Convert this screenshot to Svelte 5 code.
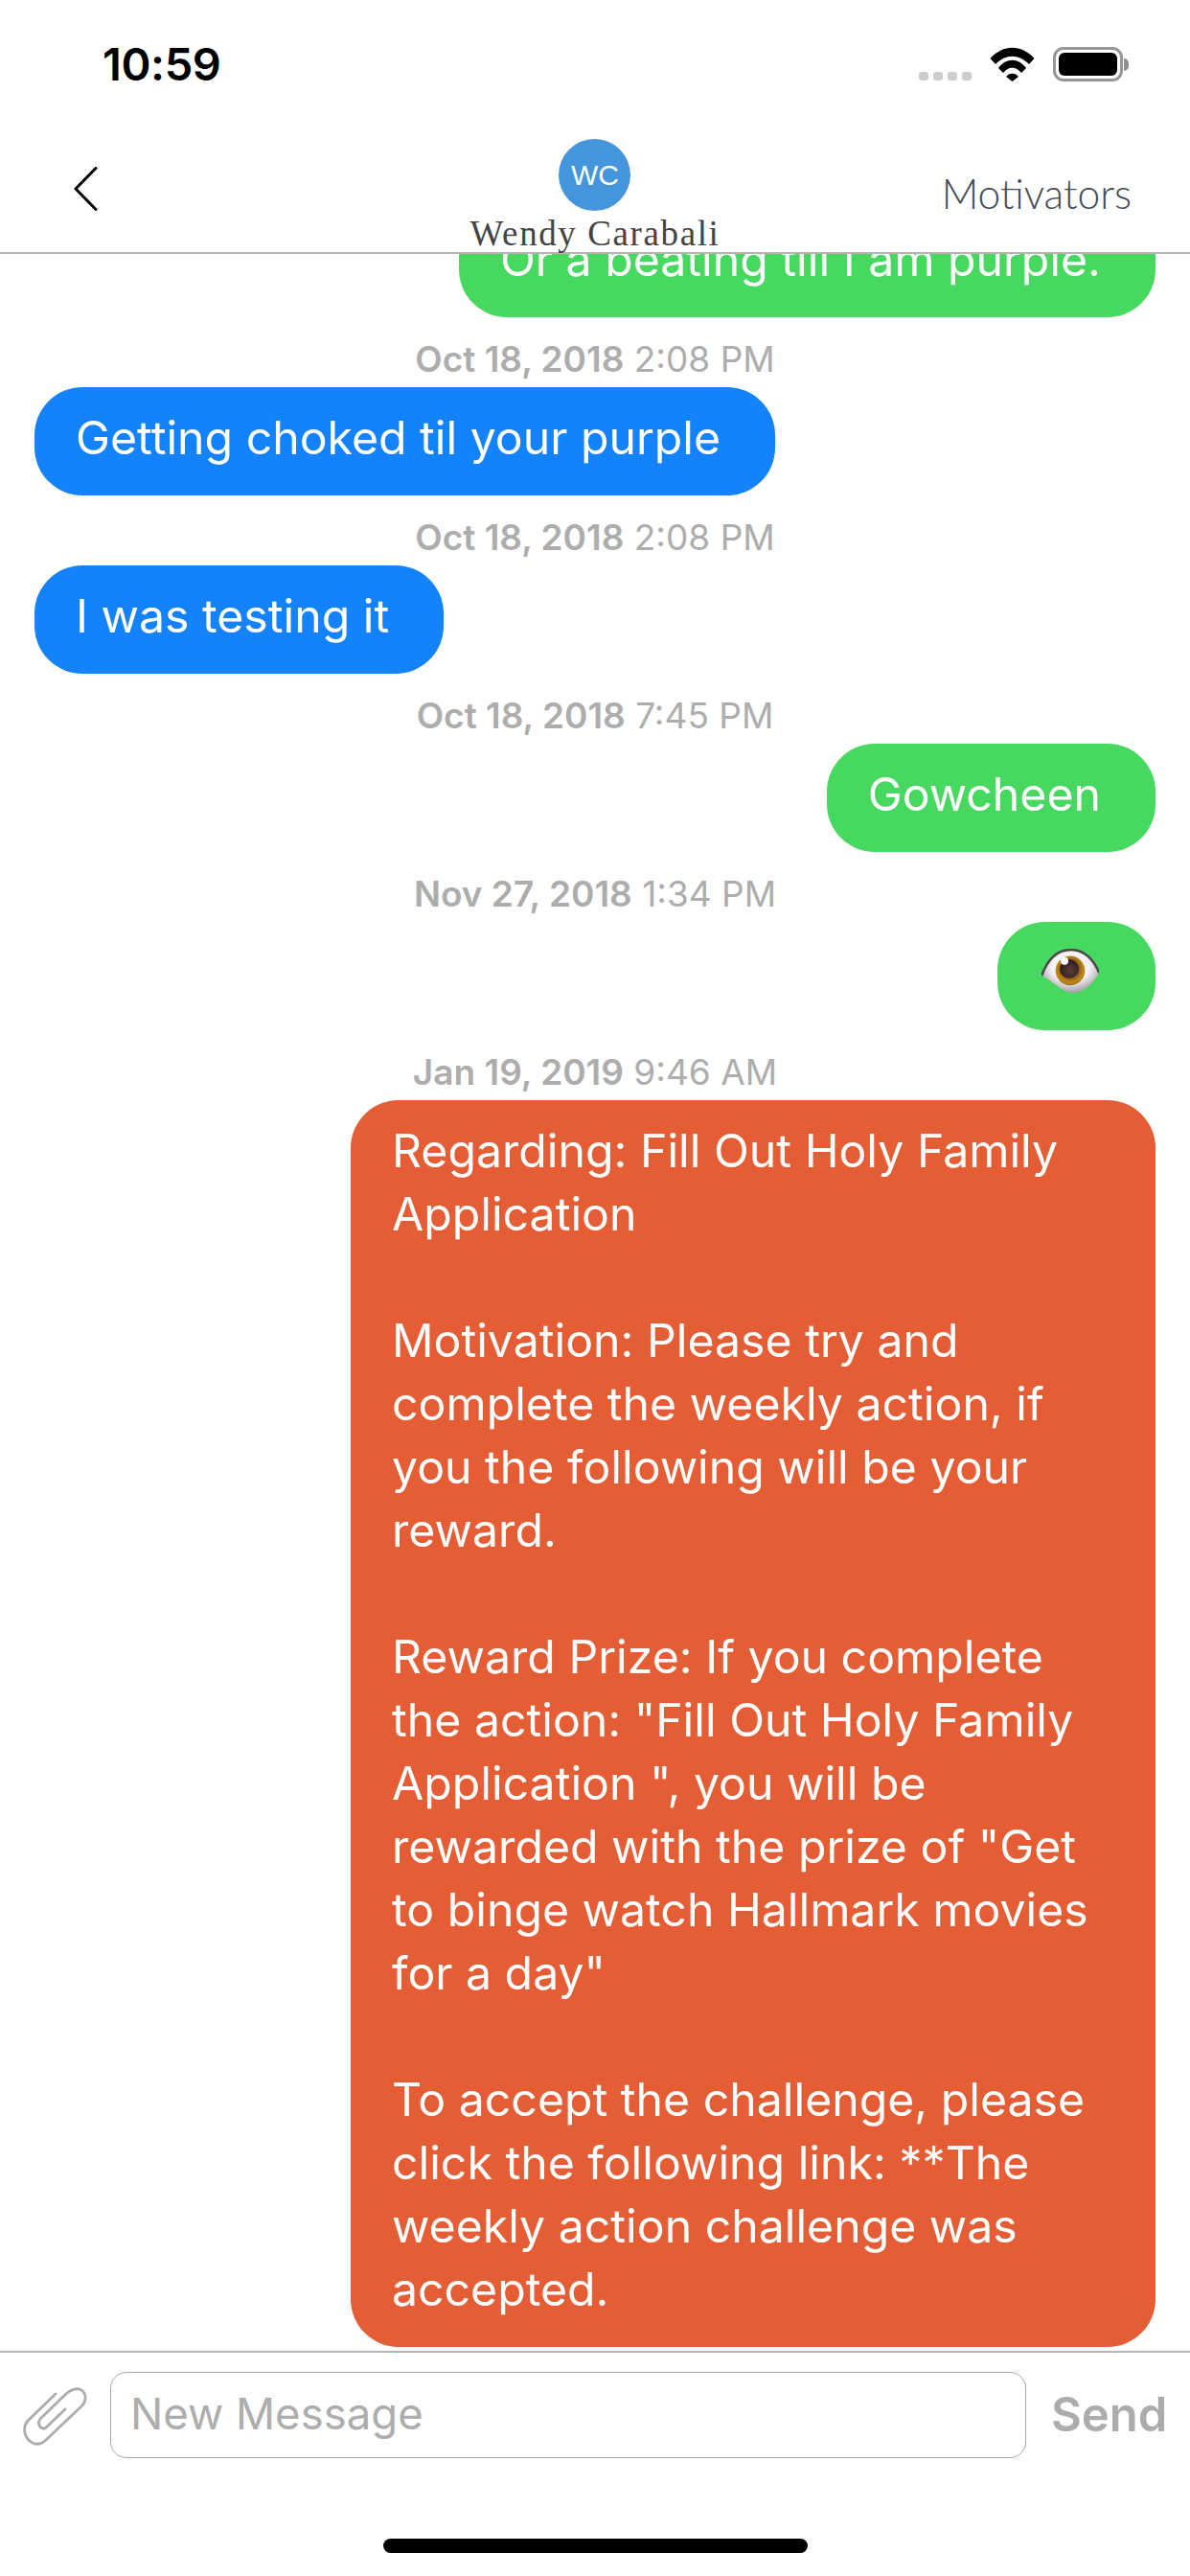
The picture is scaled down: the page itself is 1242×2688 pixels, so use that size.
<script>
  const messages = [
    { kind: 'sent', text: 'Or a beating till I am purple.' },
    { date: 'Oct 18, 2018', time: '2:08 PM', kind: 'received', text: 'Getting choked til your purple' },
    { date: 'Oct 18, 2018', time: '2:08 PM', kind: 'received', text: 'I was testing it' },
    { date: 'Oct 18, 2018', time: '7:45 PM', kind: 'sent', text: 'Gowcheen' },
    { date: 'Nov 27, 2018', time: '1:34 PM', kind: 'sent', eye: true },
    {
      date: 'Jan 19, 2019', time: '9:46 AM', kind: 'motivator',
      text: `Regarding: Fill Out Holy Family
Application

Motivation: Please try and
complete the weekly action, if
you the following will be your
reward.

Reward Prize: If you complete
the action: "Fill Out Holy Family
Application ", you will be
rewarded with the prize of "Get
to binge watch Hallmark movies
for a day"

To accept the challenge, please
click the following link: **The
weekly action challenge was
accepted.`
    }
  ];
</script>

<div class="screen">
  <div class="status">
    <span class="clock">10:59</span>
    <div class="indicators">
      <div class="signal"><i></i><i></i><i></i><i></i></div>
      <svg class="wifi" width="47" height="36" viewBox="0 0 47 36">
        <path d="M0.5 12C14-3 33-3 46.5 12L41 18C30 7 17 7 6 18Z" />
        <path d="M9 22C17 11 30 11 38 22L33 27C27 20 20 20 14 27Z" />
        <path d="M17 31C20 26.5 27 26.5 30 31L23.5 36Z" />
      </svg>
      <div class="battery"><div class="charge"></div></div>
      <div class="nub"></div>
    </div>
  </div>

  <header class="nav">
    <svg class="back" width="25" height="46" viewBox="0 0 25 46">
      <path d="M23 1.5L2 23L23 44.5" fill="none" stroke="#000" stroke-width="3" stroke-linecap="round" stroke-linejoin="round" />
    </svg>
    <div class="contact">
      <div class="avatar">WC</div>
      <div class="name">Wendy Carabali</div>
    </div>
    <div class="right">Motivators</div>
  </header>

  <main class="thread">
    {#each messages as m}
      {#if m.date}
        <div class="stamp"><b>{m.date}</b> {m.time}</div>
      {/if}
      <div class="bubble {m.kind}">
        {#if m.eye}
          <svg class="eye" width="60" height="46" viewBox="0 0 60 46">
            <defs>
              <radialGradient id="white" cx="50%" cy="40%" r="60%">
                <stop offset="0.55" stop-color="#f4f2f4" />
                <stop offset="1" stop-color="#a59ca6" />
              </radialGradient>
              <radialGradient id="iris" cx="50%" cy="45%" r="55%">
                <stop offset="0.55" stop-color="#8a5a20" />
                <stop offset="0.85" stop-color="#c58d12" />
                <stop offset="1" stop-color="#8a6012" />
              </radialGradient>
              <radialGradient id="pupil" cx="55%" cy="60%" r="60%">
                <stop offset="0" stop-color="#5c3f3c" />
                <stop offset="1" stop-color="#2c1c1e" />
              </radialGradient>
            </defs>
            <path d="M0.3 28C6 12 16 1 31 1C45 1 55 12 60 25C54 36 44 46 33 46C22 46 12 34 0.3 28Z" fill="url(#white)" />
            <path d="M0.3 28C6 12 16 1 31 1C45 1 55 12 60 25" fill="none" stroke="#47464a" stroke-width="2.4" />
            <circle cx="30" cy="22.7" r="15.3" fill="url(#iris)" />
            <circle cx="29" cy="21" r="10" fill="url(#pupil)" />
            <circle cx="24" cy="12.7" r="4" fill="#fff" />
          </svg>
        {:else}
          {m.text}
        {/if}
      </div>
    {/each}
  </main>

  <footer class="composer">
    <div class="bar">
      <svg class="clip" width="70" height="64" viewBox="22 28 70 64">
        <path d="M58 36L29 64C23 71 25 84 36 88C41 89 45 87 48 84L86 48C91 42 90 34 83 31C78 30 74 32 70 35L42 62C39 66 41 73 47 72L68 52" fill="none" stroke="#acacac" stroke-width="2.8" stroke-linecap="round" stroke-linejoin="round" />
      </svg>
      <div class="field">New Message</div>
      <span class="send">Send</span>
    </div>
    <div class="home"></div>
  </footer>
</div>

<style>
  :global(body) {
    margin: 0;
    background: #fff;
  }

  .screen {
    width: 1242px;
    height: 2688px;
    display: flex;
    flex-direction: column;
    overflow: hidden;
    background: #fff;
    font-family: Inter, "Liberation Sans", sans-serif;
  }

  .status {
    height: 132px;
    flex: none;
    display: flex;
    justify-content: space-between;
    align-items: flex-start;
    padding: 0 64px 0 107px;
    box-sizing: border-box;
  }

  .clock {
    margin-top: 39px;
    font-weight: 600;
    font-size: 47px;
    line-height: 56px;
    letter-spacing: -0.4px;
    color: #000;
  }

  .indicators {
    display: flex;
    align-items: flex-start;
    margin-top: 49px;
  }

  .signal {
    display: flex;
    gap: 5px;
    margin: 26px 19px 0 0;
  }

  .signal i {
    width: 10px;
    height: 9px;
    border-radius: 3px;
    background: #cdcdcd;
  }

  .wifi {
    fill: #000;
    margin-right: 19px;
  }

  .battery {
    width: 73px;
    height: 36px;
    box-sizing: border-box;
    border: 3px solid #969696;
    border-radius: 11px;
    padding: 3px;
  }

  .charge {
    width: 100%;
    height: 100%;
    background: #000;
    border-radius: 6px;
  }

  .nub {
    width: 5px;
    height: 13px;
    margin: 12px 0 0 1px;
    background: #8f8f8f;
    border-radius: 0 6px 6px 0;
  }

  .nav {
    height: 133px;
    flex: none;
    box-sizing: border-box;
    border-bottom: 2px solid #b4b4b4;
    position: relative;
    z-index: 2;
    background: #fff;
    display: grid;
    grid-template-columns: 1fr auto 1fr;
    align-items: start;
  }

  .back {
    margin: 42px 0 0 77px;
  }

  .contact {
    display: flex;
    flex-direction: column;
    align-items: center;
    margin-top: 13px;
  }

  .avatar {
    width: 75px;
    height: 75px;
    border-radius: 50%;
    background: #4595dd;
    color: #fff;
    display: flex;
    align-items: center;
    justify-content: center;
    font-family: "Liberation Sans", sans-serif;
    font-size: 30px;
  }

  .name {
    font-family: "Liberation Serif", serif;
    font-size: 37px;
    line-height: 44px;
    letter-spacing: 1.6px;
    color: #444;
    white-space: nowrap;
    transform: translateY(2px);
  }

  .right {
    justify-self: end;
    margin: 45px 61px 0 0;
    font-family: Lato, sans-serif;
    font-weight: 300;
    font-size: 42.5px;
    line-height: 50px;
    color: #454b55;
  }

  .thread {
    flex: 1;
    min-height: 0;
    overflow: hidden;
    display: flex;
    flex-direction: column;
    justify-content: flex-end;
    padding: 0 36px 4px;
  }

  .stamp {
    flex: none;
    height: 73px;
    box-sizing: border-box;
    padding-top: 24px;
    text-align: center;
    font-size: 37px;
    line-height: 40px;
    color: #adadad;
  }

  .stamp b {
    font-weight: 600;
  }

  .bubble {
    flex: none;
    box-sizing: border-box;
    padding: 20px 57px 27px 43px;
    border-radius: 50px;
    font-size: 48.2px;
    line-height: 66px;
    color: #fff;
    white-space: pre-line;
    width: fit-content;
  }

  .received {
    background: #1482fb;
    align-self: flex-start;
  }

  .sent {
    background: #47d85f;
    align-self: flex-end;
  }

  .motivator {
    background: #e45d34;
    align-self: flex-end;
    width: 840px;
  }

  .bubble:has(.eye) {
    width: 165px;
    height: 113px;
    padding: 28px 0 0 46px;
  }

  .eye {
    display: block;
  }

  .composer {
    height: 235px;
    flex: none;
    box-sizing: border-box;
    border-top: 2px solid #b4b4b4;
    display: flex;
    flex-direction: column;
    align-items: center;
  }

  .bar {
    width: 100%;
    display: flex;
    align-items: flex-start;
    padding-top: 20px;
    height: 194px;
    box-sizing: border-box;
  }

  .clip {
    margin: 15px 0 0 22px;
    flex: none;
  }

  .field {
    width: 956px;
    height: 90px;
    margin-left: 23px;
    box-sizing: border-box;
    border: 1.5px solid #a8a8a8;
    border-radius: 17px;
    padding-left: 20px;
    font-size: 45.5px;
    line-height: 86px;
    color: #adadad;
  }

  .send {
    margin: 16px 0 0 26px;
    font-weight: 600;
    font-size: 49px;
    line-height: 58px;
    color: #acacac;
  }

  .home {
    width: 443px;
    height: 15px;
    border-radius: 8px;
    background: #000;
  }
</style>
